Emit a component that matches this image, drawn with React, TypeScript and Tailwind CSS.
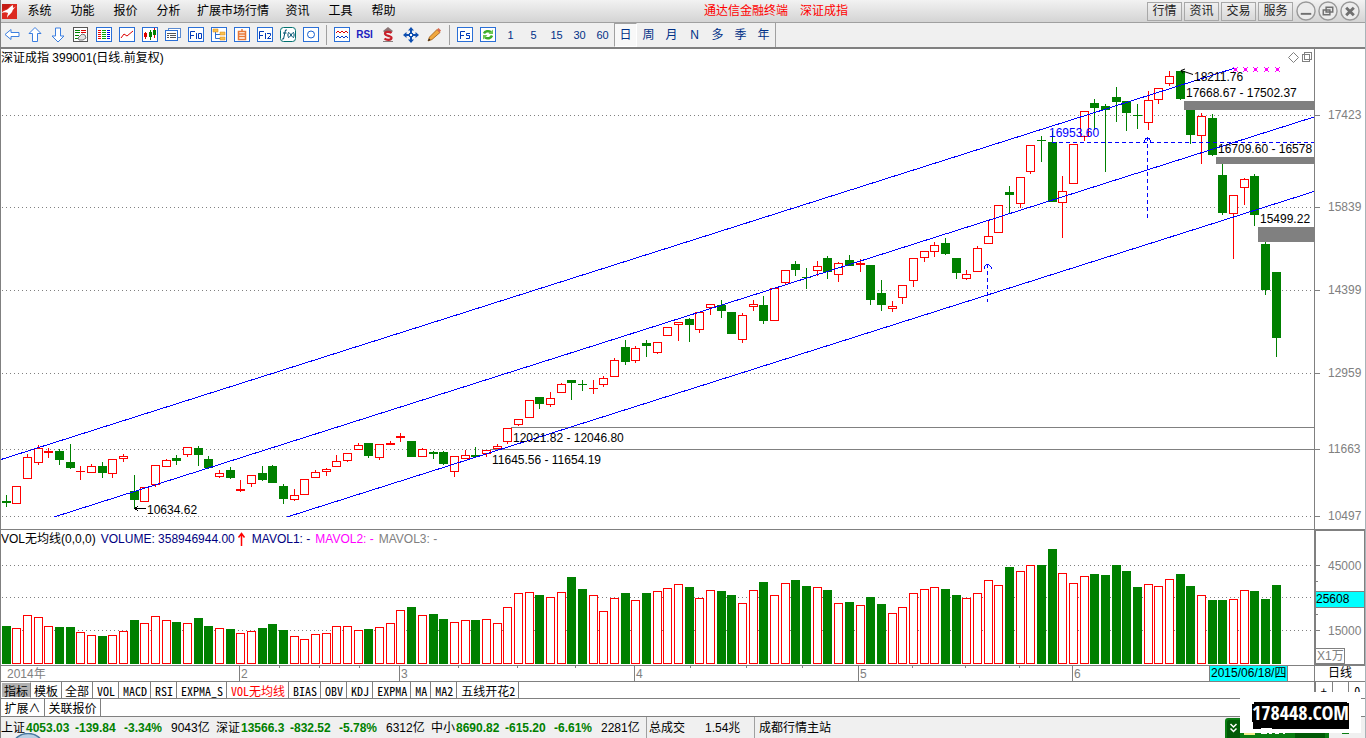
import React from "react";

type Candle = ["r" | "g", number, number, number, number, number];

// colour, high, body top, body bottom, low, volume top
const CANDLES: Candle[] = [
  ["g", 495, 501, 503, 507, 626], ["r", 486, 486, 504, 504, 628], ["r", 454, 457, 479, 479, 615], ["r", 445, 448, 463, 465, 617],
  ["r", 448, 451, 453, 458, 626], ["g", 449, 451, 460, 465, 627], ["g", 444, 462, 468, 469, 627], ["r", 466, 471, 472, 480, 632],
  ["r", 464, 466, 473, 473, 635], ["g", 462, 466, 473, 478, 636], ["r", 459, 459, 474, 478, 635], ["r", 454, 456, 459, 462, 631],
  ["g", 475, 491, 500, 509, 620], ["r", 487, 487, 502, 502, 623], ["r", 465, 465, 485, 487, 616], ["r", 459, 460, 467, 467, 620],
  ["g", 455, 458, 461, 465, 622], ["r", 447, 447, 455, 457, 623], ["g", 446, 448, 455, 466, 618], ["g", 456, 459, 468, 469, 626],
  ["r", 470, 473, 477, 478, 628], ["g", 467, 470, 478, 479, 629], ["r", 480, 489, 491, 492, 633], ["r", 475, 475, 484, 487, 631],
  ["g", 466, 473, 480, 481, 628], ["g", 465, 466, 483, 483, 624], ["g", 484, 486, 499, 504, 630], ["r", 489, 495, 500, 501, 636],
  ["r", 479, 479, 495, 495, 639], ["r", 470, 472, 478, 478, 634], ["r", 468, 469, 472, 476, 633], ["r", 455, 461, 467, 467, 626],
  ["r", 453, 453, 461, 462, 626], ["r", 443, 445, 450, 450, 630], ["g", 443, 443, 456, 458, 629], ["r", 444, 444, 458, 460, 627],
  ["r", 441, 443, 445, 445, 623], ["r", 433, 436, 438, 442, 610], ["g", 441, 441, 457, 457, 607], ["r", 448, 449, 457, 457, 615],
  ["g", 451, 452, 454, 459, 614], ["g", 451, 452, 464, 465, 619], ["r", 456, 456, 472, 477, 622], ["r", 450, 455, 459, 459, 620],
  ["g", 447, 455, 457, 458, 620], ["r", 450, 450, 454, 457, 619], ["r", 444, 446, 449, 449, 623], ["r", 428, 428, 442, 444, 607],
  ["r", 419, 419, 425, 426, 593], ["r", 400, 400, 418, 418, 592], ["g", 397, 397, 404, 409, 595], ["r", 392, 398, 405, 407, 597],
  ["r", 383, 384, 393, 393, 592], ["g", 380, 380, 383, 400, 577], ["g", 380, 384, 385, 391, 589], ["r", 380, 388, 389, 394, 595],
  ["r", 376, 378, 385, 387, 611], ["r", 358, 360, 377, 377, 598], ["g", 340, 347, 362, 365, 593], ["r", 346, 348, 361, 363, 600],
  ["g", 340, 343, 346, 357, 593], ["r", 342, 342, 353, 354, 591], ["r", 327, 327, 336, 336, 588], ["r", 322, 322, 325, 341, 584],
  ["g", 318, 319, 325, 342, 587], ["r", 312, 312, 330, 333, 598], ["r", 304, 304, 308, 315, 590], ["g", 300, 305, 311, 318, 591],
  ["g", 312, 312, 334, 334, 595], ["r", 313, 315, 340, 343, 603], ["r", 300, 304, 307, 311, 590], ["g", 296, 305, 321, 324, 582],
  ["r", 288, 288, 321, 321, 595], ["r", 270, 270, 283, 285, 583], ["g", 261, 264, 270, 276, 580], ["g", 268, 277, 278, 289, 586],
  ["r", 261, 266, 271, 276, 587], ["g", 256, 258, 272, 279, 590], ["r", 262, 263, 275, 282, 603], ["g", 255, 260, 266, 266, 602],
  ["r", 259, 263, 265, 272, 605], ["g", 265, 265, 300, 305, 597], ["g", 280, 293, 305, 311, 604], ["r", 301, 306, 309, 312, 613],
  ["r", 285, 285, 298, 304, 607], ["r", 258, 258, 281, 287, 593], ["r", 251, 251, 258, 262, 589], ["r", 242, 245, 252, 257, 587],
  ["g", 238, 243, 254, 255, 589], ["g", 258, 258, 273, 279, 595], ["r", 270, 274, 279, 280, 598], ["r", 246, 248, 272, 272, 593],
  ["r", 221, 236, 244, 244, 580], ["r", 205, 205, 233, 233, 585], ["g", 186, 192, 195, 213, 567], ["r", 177, 177, 204, 208, 571],
  ["r", 145, 145, 172, 174, 565], ["g", 136, 140, 141, 162, 565], ["g", 131, 142, 202, 202, 549], ["r", 176, 191, 203, 238, 573],
  ["r", 144, 144, 184, 184, 583], ["r", 111, 111, 137, 141, 576], ["g", 99, 103, 108, 130, 574], ["g", 104, 106, 110, 172, 575],
  ["g", 87, 97, 102, 122, 565], ["g", 101, 101, 113, 131, 571], ["g", 104, 115, 116, 129, 587], ["r", 91, 100, 123, 130, 584],
  ["r", 88, 88, 100, 104, 586], ["r", 71, 76, 84, 86, 579], ["g", 71, 71, 99, 100, 574], ["g", 110, 110, 135, 144, 586],
  ["r", 113, 116, 136, 164, 595], ["g", 114, 118, 155, 156, 600], ["g", 164, 175, 213, 215, 600], ["r", 195, 195, 214, 259, 599],
  ["r", 178, 179, 188, 205, 590], ["g", 174, 176, 215, 226, 591], ["g", 242, 244, 290, 295, 599], ["g", 272, 272, 338, 357, 585],
];

const STEP = 10.675;
const leftOf = (i: number) => Math.floor(2 + i * STEP);

const RED = "#ff0000";
const GREEN = "#008000";
const BLUE = "#0000ff";
const GREY = "#808080";
const TEXT = "font-['Liberation_Sans','Noto_Sans_CJK_SC',sans-serif]";

function Bar({ x, top, bottom, up }: { x: number; top: number; bottom: number; up: boolean }) {
  const h = bottom - top;
  if (!up) return <rect x={x} y={top} width={9} height={h} fill={GREEN} />;
  if (h < 3) return <rect x={x} y={top} width={9} height={h} fill={RED} />;
  return <rect x={x + 0.5} y={top + 0.5} width={8} height={h - 1} fill="#fff" stroke={RED} />;
}

function Dotted({ ys }: { ys: number[] }) {
  return (
    <>
      {ys.map((y) => (
        <line key={y} x1={2} x2={4000} y1={y + 0.5} y2={y + 0.5} stroke={GREY} strokeDasharray="1 3" />
      ))}
    </>
  );
}

function PriceChart() {
  return (
    <svg className={`block h-[480px] min-w-0 flex-1 text-xs ${TEXT}`} shapeRendering="crispEdges" role="img" aria-label="日线图">
      <g transform="translate(-1 -49)">
        <Dotted ys={[115, 207, 290, 373, 449, 516]} />
        <text x={1} y={62}>深证成指 399001(日线.前复权)</text>
        {CANDLES.map(([c, high, top, bottom, low], i) => {
          const x = leftOf(i);
          return (
            <g key={i}>
              <rect x={x + 4} y={high} width={1} height={low - high} fill={c === "r" ? RED : GREEN} />
              <Bar x={x} top={top} bottom={bottom} up={c === "r"} />
            </g>
          );
        })}
        <g fill={GREY}>
          <rect x={1184} y={101} width={3000} height={9} />
          <rect x={1216} y={157} width={3000} height={7} />
          <rect x={1258} y={227} width={3000} height={15} />
          <rect x={511} y={427} width={3000} height={1} />
          <rect x={490} y={449} width={3000} height={1} />
        </g>
        <g stroke={BLUE} fill="none">
          <line x1={1} y1={459.5} x2={1235} y2={68} />
          <line x1={54} y1={517} x2={1314} y2={117} />
          <line x1={287} y1={517} x2={1314} y2={191.5} />
          <line x1={1052} y1={142.5} x2={4000} y2={142.5} strokeDasharray="4 3" />
          <line x1={1147.5} y1={137} x2={1147.5} y2={221} strokeDasharray="4 3" />
          <line x1={987.5} y1={264} x2={987.5} y2={302} strokeDasharray="4 3" />
          <path d="M1144 142l2-4h3l2 4M984 269v-2l3-3h1l3 3v2" />
        </g>
        <g fill="#000">
          <text x={1194} y={81}>18211.76</text>
          <text x={1186} y={97}>17668.67 - 17502.37</text>
          <text x={1218} y={153}>16709.60 - 16578</text>
          <text x={1260} y={223}>15499.22</text>
          <text x={513} y={442}>12021.82 - 12046.80</text>
          <text x={492} y={464}>11645.56 - 11654.19</text>
          <text x={147} y={514}>10634.62</text>
          <text x={1049} y={137} fill={BLUE}>16953.60</text>
        </g>
        <g stroke="#000" fill="none">
          <path d="M135 508.5h11M138 506l-3 2.5 3 2.5" />
          <path d="M1181 70.500l12 4M1185 69l-4 1.500 2 3" shapeRendering="auto" />
        </g>
        <g fill="#ff00ff">
          {[1235, 1245, 1255, 1266, 1277].map((x) => (
            <path key={x} d={`M${x - 1} 68h3v3h-3zM${x - 2} 67h1v1h-1zM${x + 2} 67h1v1h-1zM${x - 2} 71h1v1h-1zM${x + 2} 71h1v1h-1z`} />
          ))}
        </g>
        <g stroke={GREY} fill="#fff">
          <path d="M1293.500 52.500l5 5-5 5-5-5z" shapeRendering="auto" />
          <path d="M1304.500 52.500h7v7h-7zM1302.500 54.500h7v7h-7z" />
        </g>
      </g>
    </svg>
  );
}

function PriceAxis() {
  const labels: [number, string][] = [[115, "17423"], [207, "15839"], [290, "14399"], [373, "12959"], [449, "11663"], [516, "10497"]];
  return (
    <svg className={`block h-[480px] w-[51px] shrink-0 border-l border-[#808080] text-xs ${TEXT}`} shapeRendering="crispEdges">
      {labels.map(([y, t]) => (
        <g key={t} fill={GREY}>
          <rect x={0} y={y - 49} width={5} height={1} />
          <text x={13} y={y - 45}>{t}</text>
        </g>
      ))}
    </svg>
  );
}

function VolumeChart() {
  return (
    <div className="flex min-w-0 flex-1 flex-col">
      <div className="flex h-[17px] items-center gap-[5px] whitespace-nowrap text-xs leading-4">
        <span>VOL无均线(0,0,0)</span>
        <span className="flex items-center gap-0.5 text-[#000080]">
          VOLUME: 358946944.00
          <svg className="h-3.5 w-2.5" viewBox="0 0 10 14" fill="none" stroke={RED}>
            <path d="M4.500 14V1M1.500 5.500l3-4 3 4" strokeWidth="1.500" />
          </svg>
        </span>
        <span className="text-[#000080]">MAVOL1: -</span>
        <span className="text-[#ff00ff]">MAVOL2: -</span>
        <span className="text-[#808080]">MAVOL3: -</span>
      </div>
      <svg className="block h-[118px] w-full" shapeRendering="crispEdges" role="img" aria-label="成交量">
        <g transform="translate(-1 -547)">
          <Dotted ys={[565, 597, 630]} />
          {CANDLES.map(([c, , , , , v], i) => (
            <Bar key={i} x={leftOf(i)} top={v} bottom={664} up={c === "r"} />
          ))}
        </g>
      </svg>
    </div>
  );
}

function VolumeAxis() {
  return (
    <svg className={`block h-[135px] w-[51px] shrink-0 text-xs ${TEXT}`} shapeRendering="crispEdges">
      <g fill={GREY}>
        <rect x={0} y={0} width={2} height={135} />
        <rect x={0} y={0} width={51} height={1} />
        <rect x={50} y={0} width={1} height={135} />
        <rect x={0} y={134} width={51} height={1} />
        <rect x={2} y={35} width={4} height={1} />
        <rect x={2} y={51} width={2} height={1} />
        <rect x={2} y={84} width={2} height={1} />
        <rect x={2} y={100} width={4} height={1} />
        <rect x={2} y={61} width={48} height={17} />
        <text x={14} y={40}>45000</text>
        <text x={14} y={105}>15000</text>
      </g>
      <rect x={2} y={62} width={48} height={15} fill="#00ffff" />
      <text x={2} y={73} fill="#000">25608</text>
      <rect x={1.5} y={118.5} width={29} height={15} fill="#fff" stroke={GREY} />
      <text x={3} y={130} fill={GREY}>X1万</text>
    </svg>
  );
}

function TimeAxis() {
  const months: [number, string][] = [[239, "2"], [399, "3"], [634, "4"], [858, "5"], [1072, "6"]];
  const ticks = [279, 319, 359, 458, 517, 575, 690, 746, 802, 912, 965, 1019];
  return (
    <div className="flex h-4 border-b border-[#808080]">
      <svg className={`block h-[15px] min-w-0 flex-1 text-xs ${TEXT}`} shapeRendering="crispEdges">
        <g transform="translate(-1 0)" fill={GREY}>
          <text x={7} y={12}>2014年</text>
          {months.map(([x, t]) => (
            <g key={t}>
              <rect x={x} y={0} width={1} height={15} />
              <text x={x + 2} y={12}>{t}</text>
            </g>
          ))}
          {ticks.map((x) => (
            <rect key={x} x={x} y={0} width={1} height={2} />
          ))}
          <rect x={1209} y={0} width={79} height={15} />
          <rect x={1210} y={0} width={77} height={15} fill="#00ffff" />
          <text x={1211} y={11} fill="#000">2015/06/18/四</text>
        </g>
      </svg>
      <button className="w-[51px] shrink-0 border-l border-[#808080] text-center leading-[15px]">日线</button>
    </div>
  );
}

const box = <rect x="0.500" y="0.500" width="15" height="14" fill="#fff" stroke="#2a6fd6" />;

const ICONS: Record<string, React.ReactNode> = {
  后退: <path d="M1 7.500l6-5v3h8v4H7v3z" fill="#fff" stroke="#3c7fe0" />,
  上移: <path d="M8 0.500l6 6h-3.500v8h-5v-8H2z" fill="#fff" stroke="#3c7fe0" />,
  下移: <path d="M8 15l6-6h-3.500V1h-5v8H2z" fill="#fff" stroke="#3c7fe0" />,
  自选: (
    <>
      <rect x="0.500" y="0.500" width="14" height="14" fill="#fff" stroke="#555" />
      <path d="M2 3.500h5M2 5.500h5M2 8.500h4M2 11.500h3" stroke="#008000" />
      <path d="M8 3.500h5M8 5.500h5" stroke="#d00" />
      <path d="M6 13l-1-2 4-4 3 1 1 3-3 2z" fill="#e4e4e4" stroke="#777" />
    </>
  ),
  行情表: (
    <>
      {box}
      <path d="M2 3.500h3M2 5.500h3M2 7.500h3M2 9.500h3M2 11.500h3" stroke="#e00" />
      <path d="M6 3.500h4M6 5.500h4M6 7.500h4M6 9.500h4M6 11.500h4" stroke="#0a0" />
      <path d="M11 3.500h3M11 5.500h3M11 7.500h3M11 9.500h3M11 11.500h3" stroke="#00e" />
    </>
  ),
  分时图: (
    <>
      {box}
      <path d="M2 11l3-4 3 2 6-5" fill="none" stroke="#d00" />
    </>
  ),
  K线图: (
    <>
      {box}
      <path d="M3.500 5v7M12.500 1v10" stroke="#d00" />
      <rect x="2" y="6" width="3" height="4" fill="#d00" />
      <path d="M8.500 3v10" stroke="#008000" />
      <rect x="7" y="5" width="3" height="5" fill="#008000" />
      <rect x="11" y="3" width="3" height="5" fill="#008000" />
    </>
  ),
  多窗口: (
    <>
      <rect x="3.500" y="1.500" width="12" height="9" fill="#fff" stroke="#5a8ad0" />
      <rect x="0.500" y="3.500" width="12" height="10" fill="#fff" stroke="#2a6fd6" />
      <path d="M2 6.500h9M2 8.500h2M5 8.500h6M2 10.500h2M5 10.500h6" stroke="#555" />
    </>
  ),
  基本资料: (
    <>
      {box}
      <path d="M2.500 12V4.500H7M2.500 8.500H6M8.500 6V12M10.500 6.500h3v5h-3z" fill="none" stroke="#0038b8" />
    </>
  ),
  板块: (
    <>
      {box}
      <path d="M4.500 5v6.500H9M4.500 7.500H9" fill="none" stroke="#2a6fd6" />
      <path d="M2 2h5v3H2zM9 5h5v3H9zM9 10h5v3H9z" fill="#f8c050" stroke="#d88a10" strokeWidth="0.500" />
    </>
  ),
  自定义: (
    <>
      {box}
      <path d="M4.500 4.500h7v8h-7zM4.500 7h7M4.500 9.500h7M8 2v2" fill="none" stroke="#e87838" strokeWidth="1.500" />
    </>
  ),
  品种资料: (
    <>
      {box}
      <path d="M2.500 12V4.500H7M2.500 8.500H6M8.500 6V12M10 6.500h3.500v2l-3 3H14" fill="none" stroke="#0038b8" />
    </>
  ),
  公式: (
    <>
      <rect x="0.500" y="0.500" width="15" height="14" rx="3" fill="#fff" stroke="#007070" />
      <path d="M7 3H5.500L3.500 12H2M3 6h3.500M9 5c-1.500 2-1.500 4 0 6M13 5c1.500 2 1.500 4 0 6M9.500 6l3 4M12.500 6l-3 4" fill="none" stroke="#005070" />
    </>
  ),
  选股: (
    <>
      {box}
      <circle cx="8" cy="7.500" r="3.500" fill="#fff" stroke="#1660d0" />
    </>
  ),
  多线: (
    <>
      {box}
      <path d="M2 6l2-2 2 2 2-2 2 2 2-2 2 2" fill="none" stroke="#d00" />
      <path d="M2 11l2-2 2 2 2-2 2 2 2-2 2 2" fill="none" stroke="#0038c8" />
    </>
  ),
  资金: (
    <>
      <path d="M8 0l5 4-2 2H5L3 4z" fill="#8a7474" />
      <path d="M11.500 6C9 4 4.500 4.800 5 7s7 1.500 6.500 4S6.500 13.500 4.500 11.500" fill="none" stroke="#c8202a" strokeWidth="2.200" />
      <path d="M3 14.500h10" stroke="#8a8080" />
    </>
  ),
  移动: (
    <>
      <path d="M8 0l3 3.500H9V7h3.500V5L16 8l-3.500 3V9H9v3.500h2L8 16l-3-3.500h2V9H3.500v2L0 8l3.500-3v2H7V3.500H5z" fill="#0f4fb0" />
      <rect x="6.500" y="6.500" width="3" height="3" fill="#fff" stroke="#0f4fb0" />
    </>
  ),
  画线: (
    <>
      <path d="M2 14l1.500-4L11 2.500l3 3L6 12.500z" fill="#f0a840" stroke="#a05a10" strokeWidth="0.800" />
      <path d="M11 2.500l1.500-1.500 2.500 2.500-1.500 2z" fill="#d86a50" />
      <path d="M2 14l1-2.500 1.500 1.500z" fill="#222" />
    </>
  ),
  切换: (
    <>
      {box}
      <path d="M3.500 12V4.500H8M3.500 8.500H7M13 6.500H9.500V8.500h3v3H9" fill="none" stroke="#0038b8" />
    </>
  ),
  刷新: (
    <>
      {box}
      <path d="M4 6.500C5 4 8.500 3.500 11 5" fill="none" stroke="#3cae28" strokeWidth="2.500" />
      <path d="M12 8.500C11 11.500 7.500 12 5 10.500" fill="none" stroke="#3cae28" strokeWidth="2.500" />
      <path d="M8.500 7H13V2.500zM7.500 8H3V12.500z" fill="#6cc850" />
    </>
  ),
};

function Icon({ name }: { name: string }) {
  return (
    <button aria-label={name} className="flex w-[23px] items-center justify-center">
      <svg className="size-4" viewBox="0 0 16 16">{ICONS[name]}</svg>
    </button>
  );
}

function Separator() {
  return (
    <div className="flex w-2 justify-center py-0.5">
      <div className="w-px bg-[#a0a0a0]" />
    </div>
  );
}

function Header() {
  const menu = ["系统", "功能", "报价", "分析"];
  const menuEnd = ["资讯", "工具", "帮助"];
  return (
    <header className="flex h-[23px] items-center border-b border-[#a0a0a0] bg-linear-to-b from-[#f2f2f2] to-[#d4d4d4]">
      <svg className="mx-px size-[15px]" viewBox="0 0 15 15">
        <rect width="15" height="15" fill="#dc2a20" />
        <path d="M0 0h9L5 5 0 6z" fill="#c41c14" />
        <path d="M0 9c1-3 4-2 6-4s3-3 5-4c0 3-1 4 4 1-3 2-4 3-5 6-1 2-4 3-5 6 0-3 1-4 1-5-2-1-4-1-6 0z" fill="#fff" />
      </svg>
      <nav className="flex">
        {menu.map((m) => <button key={m} className="w-[43px]">{m}</button>)}
        <button className="w-[86px]">扩展市场行情</button>
        {menuEnd.map((m) => <button key={m} className="w-[43px]">{m}</button>)}
      </nav>
      <h1 className="flex flex-1 justify-center gap-3 text-[#ff0000]">
        <span>通达信金融终端</span>
        <span>深证成指</span>
      </h1>
      <div className="flex gap-0.5">
        {["行情", "资讯", "交易", "服务"].map((t) => (
          <button key={t} className="h-[19px] w-[35px] border border-[#a8a8a8] bg-linear-to-b from-[#f0f0f0] to-[#d8d8d8] text-[#222]">{t}</button>
        ))}
      </div>
      <div className="flex gap-0.5 pr-[5px] pl-[3px]">
        {[
          ["最小化", <path key="a" d="M5 13.500h11" strokeWidth="2" />],
          ["还原", <path key="b" d="M8.500 6.500h7v5h-7zM5.500 9.500h7v5h-7z" fill="#e4e4e4" strokeWidth="1.500" />],
          ["关闭", <path key="c" d="M6.500 7l8 8M14.500 7l-8 8" strokeWidth="3" />],
        ].map(([label, shape]) => (
          <button key={label as string} aria-label={label as string}>
            <svg className="block size-5" viewBox="0 0 21 21" fill="none" stroke="#707070">
              <circle cx="10.500" cy="10.500" r="9.500" fill="#ececec" stroke="#999" strokeWidth="1.500" />
              {shape}
            </svg>
          </button>
        ))}
      </div>
    </header>
  );
}

function Toolbar() {
  return (
    <div className="-ml-px flex h-[26px] border-b-2 border-[#808080] bg-[#f0f0f0] text-[11px] text-[#003087]">
      {["后退", "上移", "下移", "自选", "行情表", "分时图", "K线图", "多窗口", "基本资料", "板块", "自定义", "品种资料", "公式", "选股"].map((n) => <Icon key={n} name={n} />)}
      <Separator />
      <Icon name="多线" />
      <button className="w-[23px] text-[10px] font-bold text-[#2020c0]">RSI</button>
      {["资金", "移动", "画线"].map((n) => <Icon key={n} name={n} />)}
      <Separator />
      {["切换", "刷新"].map((n) => <Icon key={n} name={n} />)}
      {["1", "5", "15", "30", "60"].map((t) => <button key={t} className="w-[23px]">{t}</button>)}
      <button className="w-[23px] border border-white border-t-[#a0a0a0] border-l-[#a0a0a0] bg-[#f8f8f8] text-xs">日</button>
      {["周", "月", "N", "多", "季", "年"].map((t) => <button key={t} className="w-[23px] text-xs">{t}</button>)}
      <div className="w-px bg-[#a0a0a0]" />
    </div>
  );
}

function Tabs() {
  const tab = "border-r border-[#808080] leading-[15px]";
  return (
    <div className="font-['Noto_Sans_Mono_CJK_SC','Noto_Sans_CJK_SC',monospace]">
      <div className="flex h-[17px] border-b border-[#808080]">
        <button className="w-[30px] border border-white border-r-[#808080] bg-[#b0b0b0] leading-[13px]">指标</button>
        <button className={`w-[31px] ${tab}`}>模板</button>
        <button className={`w-[31px] ${tab}`}>全部</button>
        {["VOL", "MACD", "RSI", "EXPMA_S"].map((t) => <button key={t} className={`pr-[3px] pl-1 ${tab}`}>{t}</button>)}
        <button className={`pr-[3px] pl-1 text-[#ff0000] ${tab}`}>VOL无均线</button>
        {["BIAS", "OBV", "KDJ", "EXPMA", "MA", "MA2", "五线开花2"].map((t) => <button key={t} className={`pr-[3px] pl-1 ${tab}`}>{t}</button>)}
        <div className="ml-auto flex w-[51px] border-l-2 border-[#808080] text-center">
          <button aria-label="放大" className={`flex-1 ${tab}`}>+</button>
          <button aria-label="缩小" className={`flex-1 ${tab}`}>-</button>
          <button aria-label="复位" className="flex-1 leading-[15px]">0</button>
        </div>
      </div>
      <div className="flex h-[18px] border-b border-[#808080]">
        <button className="w-11 border-r border-[#808080] leading-4">扩展∧</button>
        <button className="w-14 border-r border-[#808080] leading-4">关联报价</button>
      </div>
    </div>
  );
}

function StatusBar() {
  const quotes = [
    ["上证", "4053.03", "-139.84", "-3.34%", "9043亿"],
    ["深证", "13566.3", "-832.52", "-5.78%", "6312亿"],
    ["中小", "8690.82", "-615.20", "-6.61%", "2281亿"],
  ];
  return (
    <footer className="relative flex h-[21px] items-center overflow-hidden bg-[#f0f0f0]">
      {quotes.map(([name, price, change, pct, amount]) => (
        <div key={name} className="grid w-[215px] grid-cols-[25px_49px_49px_47px_auto] whitespace-nowrap">
          <span>{name}</span>
          <b className="text-[#008000]">{price}</b>
          <b className="text-[#008000]">{change}</b>
          <b className="text-[#008000]">{pct}</b>
          <span>{amount}</span>
        </div>
      ))}
      <div className="flex h-full w-[108px] items-center gap-5 border-l border-[#a0a0a0] pl-0.5">
        <span>总成交</span>
        <span>1.54兆</span>
      </div>
      <div className="flex h-full items-center border-l border-[#a0a0a0] pl-1">成都行情主站</div>
      <svg className="absolute bottom-0 left-3.5 h-[5px] w-[26px]" viewBox="0 0 26 5">
        <ellipse cx="13" cy="13" rx="15" ry="12.500" fill="#b8cfe4" stroke="#4878a0" strokeWidth="1.500" />
      </svg>
      <svg className="absolute right-0 bottom-0 h-5 w-[140px]" viewBox="0 0 140 20">
        <path d="M0 20V3q0-3 3-3h98q3 0 3 3v17z" fill="#0a7d12" />
        <path d="M2 20V4q0-2 2-2h11v18zM70 14h30v6H70z" fill="#005a06" />
        <path d="M5.500 6l3 3 3-3M5.500 10.500l3 3 3-3" fill="none" stroke="#fff" strokeWidth="1.500" />
        <path d="M19 14h11v3H19z" fill="#f4f08a" />
        <path d="M36 14h6v2h-6zM44 14h3v2h-3zM50 14h4v2h-4zM58 14h2v2h-2z" fill="#fff" />
        <path d="M117 14h7v2h-7z" fill="#0a7d12" />
      </svg>
    </footer>
  );
}

function Watermark() {
  return (
    <div className="absolute right-1 bottom-[5px] flex h-[41px] w-[121px] items-center justify-center bg-white">
      <svg className="absolute top-[10px] left-3 h-7 w-[98px]" viewBox="0 0 98 28">
        <path d="M2 0h93v1h2v26H20v-1H9v1H1v-7H0V2h2z" fill="#000" />
      </svg>
      <span className="relative font-['Liberation_Sans_Narrow','Open_Sans_Condensed',sans-serif] text-[20px] leading-6 font-bold text-white">178448.COM</span>
    </div>
  );
}

export default function App() {
  return (
    <div className={`relative overflow-hidden border-r border-l border-r-[#a8b4b8] border-l-[#808080] bg-white text-xs text-black ${TEXT}`}>
      <Header />
      <Toolbar />
      <main>
        <section className="flex border-b border-[#808080]">
          <PriceChart />
          <PriceAxis />
        </section>
        <section className="flex border-b border-[#808080]">
          <VolumeChart />
          <VolumeAxis />
        </section>
        <TimeAxis />
      </main>
      <Tabs />
      <StatusBar />
      <Watermark />
    </div>
  );
}
